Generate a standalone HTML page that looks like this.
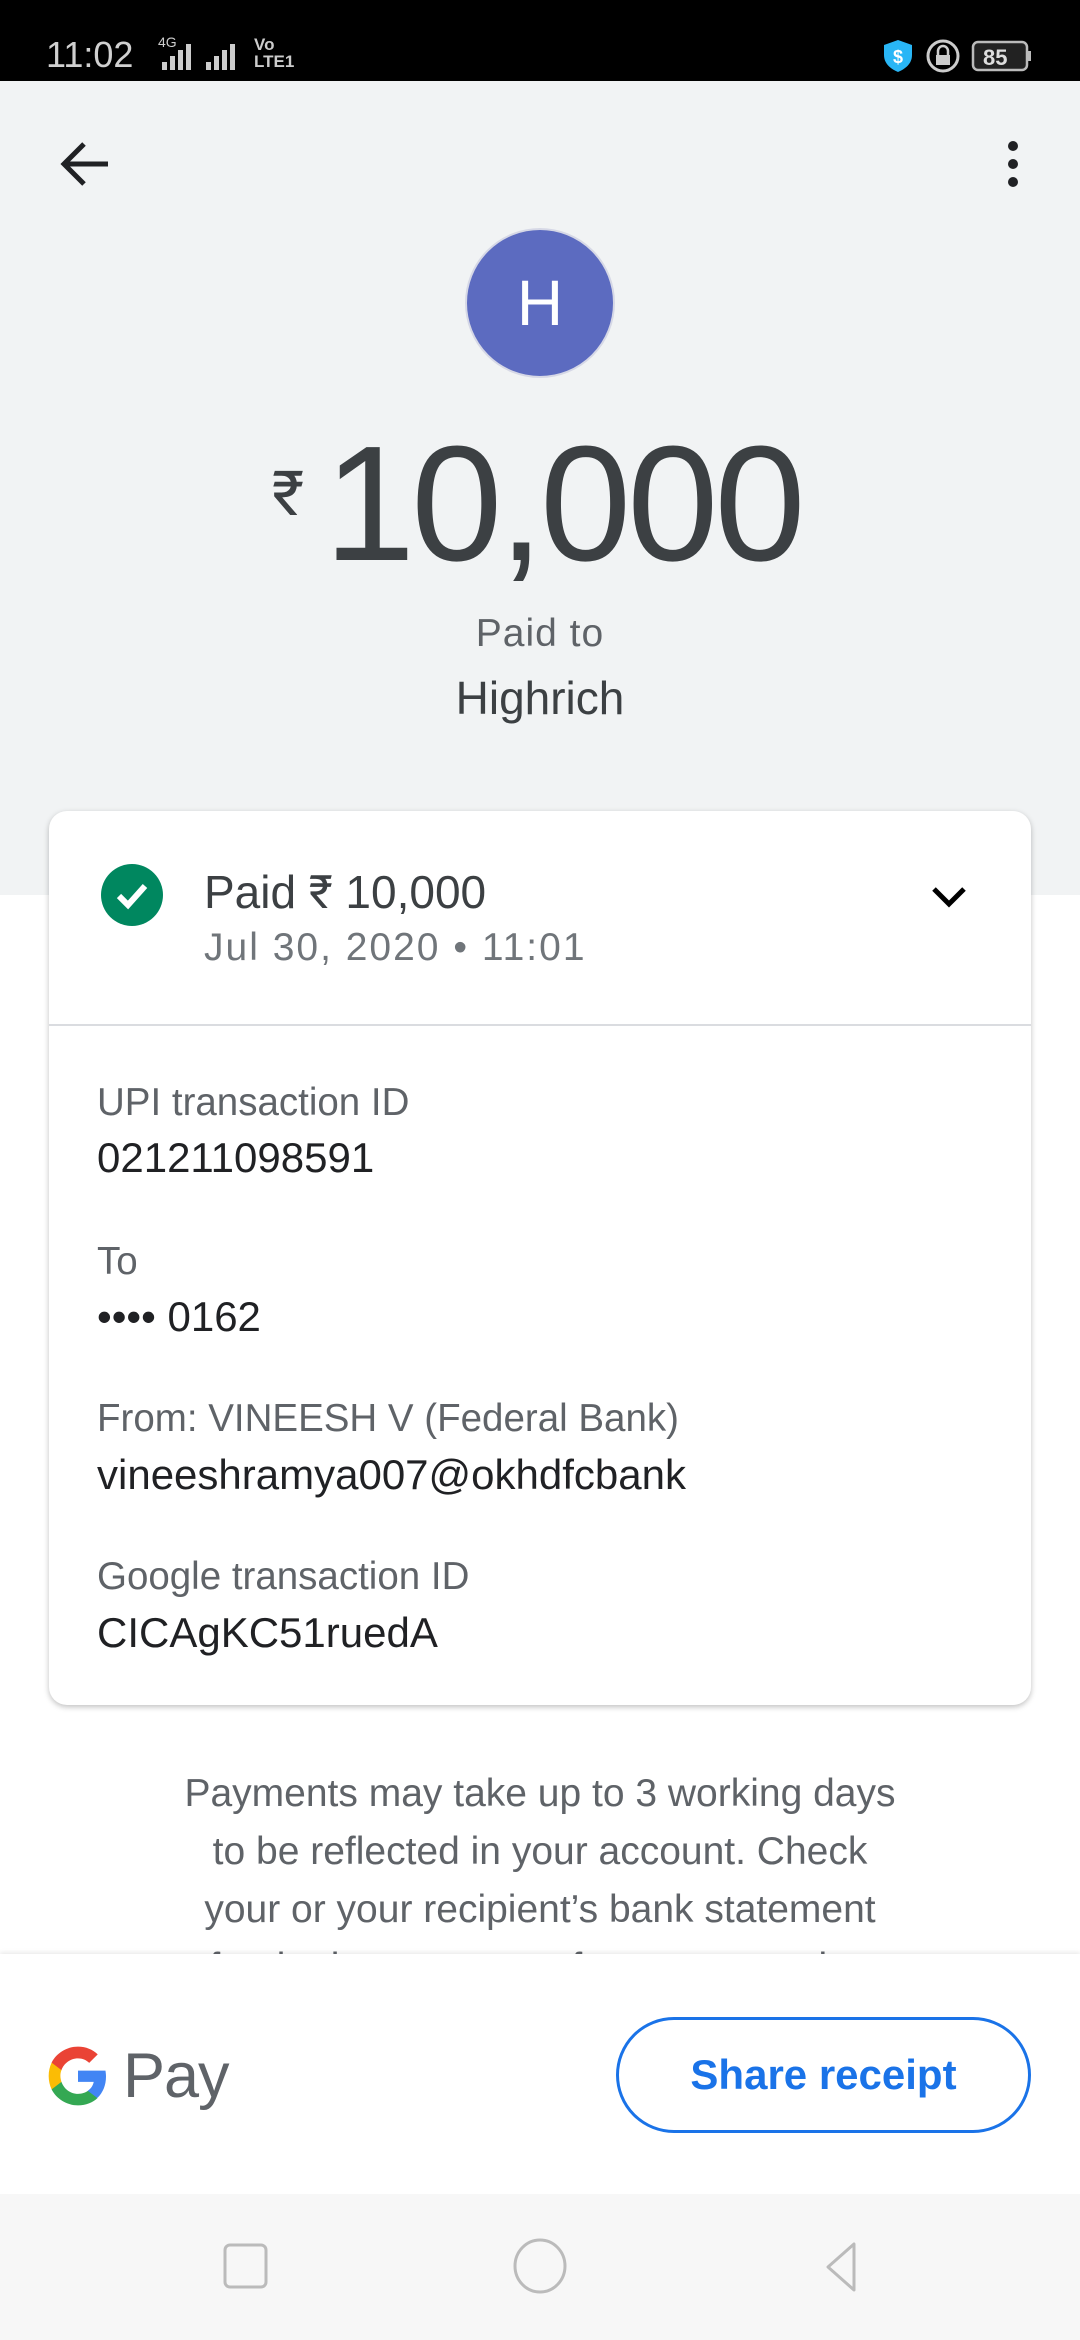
<!DOCTYPE html>
<html><head><meta charset="utf-8"><style>
*{margin:0;padding:0;box-sizing:border-box}
body{width:1080px;height:2340px;position:relative;overflow:hidden;background:#fff;font-family:"Liberation Sans",Roboto,sans-serif;color:#3c4043}
.a{position:absolute}
.sb{left:0;top:0;width:1080px;height:81px;background:#000;color:#ccc}
.top{left:0;top:81px;width:1080px;height:814px;background:#f1f3f4}
.card{left:49px;top:811px;width:982px;height:894px;background:#fff;border-radius:18px;box-shadow:0 2px 6px rgba(0,0,0,.25)}
.lbl{left:48px;font-size:38.5px;color:#5f6368}
.val{left:48px;font-size:42px;color:#202124}
.ft{left:0;width:1080px;text-align:center;font-size:39px;color:#5f6368;line-height:58px}
</style></head><body>
<div class="a sb">
 <div class="a" style="left:46px;top:34px;font-size:36px;color:#d0d0d0">11:02</div>
 <div class="a" style="left:158px;top:34px;font-size:14px;color:#ccc">4G</div>
 <svg class="a" style="left:160px;top:42px" width="140" height="30"><g fill="#ccc"><rect x="2" y="20" width="5" height="8"/><rect x="10" y="14" width="5" height="14"/><rect x="18" y="8" width="5" height="20"/><rect x="26" y="2" width="5" height="26"/><rect x="46" y="20" width="5" height="8"/><rect x="54" y="14" width="5" height="14"/><rect x="62" y="8" width="5" height="20"/><rect x="70" y="2" width="5" height="26"/></g></svg>
 <div class="a" style="left:254px;top:36px;font-size:17px;font-weight:bold;color:#ccc;line-height:17px">Vo<br>LTE1</div>
 <svg class="a" style="left:884px;top:38px" width="150" height="36"><path d="M14 2 L28 7 V17 C28 26 21 31 14 34 C7 31 0 26 0 17 V7Z" fill="#29b6f6"/><text x="9" y="25" font-size="18" fill="#fff" font-family="Liberation Sans" font-weight="bold">$</text><circle cx="59" cy="18" r="15" fill="none" stroke="#ccc" stroke-width="3"/><rect x="52" y="17" width="14" height="10" fill="#ccc"/><path d="M54 17v-4a5 5 0 0 1 10 0v4" fill="none" stroke="#ccc" stroke-width="2.5"/><rect x="89" y="4" width="54" height="28" rx="5" fill="#222" stroke="#bbb" stroke-width="2.5"/><rect x="144" y="13" width="3" height="10" fill="#bbb"/><text x="99" y="27" font-size="22" fill="#ddd" font-family="Liberation Sans" font-weight="bold">85</text></svg>
</div>
<div class="a top"></div>
<svg class="a" style="left:56px;top:140px" width="56" height="48"><path d="M52 24H8M28 4L8 24l20 20" fill="none" stroke="#202124" stroke-width="5"/></svg>
<svg class="a" style="left:1003px;top:140px" width="20" height="50"><circle cx="10" cy="6" r="5" fill="#202124"/><circle cx="10" cy="24" r="5" fill="#202124"/><circle cx="10" cy="42" r="5" fill="#202124"/></svg>
<div class="a" style="left:465px;top:228px;width:150px;height:150px;border-radius:50%;background:#5c6bc0;border:2px solid #d6d8e6;color:#fff;font-size:64px;text-align:center;line-height:146px">H</div>
<div class="a" style="left:272px;top:458px;font-size:62px;color:#3c4043">₹</div>
<div class="a" style="left:324px;top:404px;font-size:164px;color:#3c4043;line-height:200px;letter-spacing:-4px">10,000</div>
<div class="a" style="left:0;top:612px;width:1080px;text-align:center;font-size:39px;color:#5f6368;letter-spacing:1px">Paid to</div>
<div class="a" style="left:0;top:671px;width:1080px;text-align:center;font-size:46px;color:#3c4043">Highrich</div>
<div class="a card">
 <div class="a" style="left:52px;top:53px;width:62px;height:62px;border-radius:50%;background:#00875f"></div>
 <svg class="a" style="left:52px;top:53px" width="62" height="62"><path d="M18 32l9 9 17-19" fill="none" stroke="#fff" stroke-width="6"/></svg>
 <div class="a" style="left:155px;top:54px;font-size:46px;color:#3c4043">Paid ₹ 10,000</div>
 <div class="a" style="left:155px;top:115px;font-size:39px;color:#70757a;letter-spacing:2px">Jul 30, 2020 • 11:01</div>
 <svg class="a" style="left:882px;top:74px" width="36" height="24"><path d="M3 4l15 15 15-15" fill="none" stroke="#000" stroke-width="5"/></svg>
 <div class="a" style="left:0;top:213px;width:982px;height:2px;background:#dadce0"></div>
 <div class="a lbl" style="top:270px">UPI transaction ID</div>
 <div class="a val" style="top:323px">021211098591</div>
 <div class="a lbl" style="top:429px">To</div>
 <div class="a val" style="top:482px">•••• 0162</div>
 <div class="a lbl" style="top:586px">From: VINEESH V (Federal Bank)</div>
 <div class="a val" style="top:640px">vineeshramya007@okhdfcbank</div>
 <div class="a lbl" style="top:744px">Google transaction ID</div>
 <div class="a val" style="top:798px">CICAgKC51ruedA</div>
</div>
<div class="a ft" style="top:1765px">Payments may take up to 3 working days<br>to be reflected in your account. Check<br>your or your recipient’s bank statement<br>for the latest status of your transaction</div>
<div class="a" style="left:0;top:1954px;width:1080px;height:240px;background:#fff;box-shadow:0 -2px 4px rgba(0,0,0,.08)"></div>
<svg class="a" style="left:46px;top:2040px" width="64" height="72" viewBox="0 0 24 24"><path d="M22.5 12.2c0-.8-.1-1.5-.2-2.2H12v4.2h5.9c-.3 1.4-1 2.5-2.2 3.3v2.7h3.6c2-1.9 3.2-4.7 3.2-8z" fill="#4285f4"/><path d="M12 23c3 0 5.5-1 7.3-2.7l-3.6-2.7c-1 .7-2.2 1.1-3.7 1.1-2.9 0-5.3-1.9-6.2-4.5H2.1v2.8C3.9 20.5 7.7 23 12 23z" fill="#34a853"/><path d="M5.8 14.2c-.2-.7-.4-1.4-.4-2.2s.1-1.5.4-2.2V7H2.1C1.4 8.5 1 10.2 1 12s.4 3.5 1.1 5z" fill="#fbbc05"/><path d="M12 5.4c1.6 0 3.1.6 4.2 1.700l3.2-3.2C17.5 2.1 15 1 12 1 7.7 1 3.9 3.5 2.1 7l3.7 2.8C6.7 7.3 9.1 5.4 12 5.4z" fill="#ea4335"/></svg>
<div class="a" style="left:123px;top:2040px;font-size:63px;color:#5f6368;letter-spacing:-1px">Pay</div>
<div class="a" style="left:616px;top:2017px;width:415px;height:116px;border:3px solid #1a73e8;border-radius:58px;color:#1a73e8;font-size:42px;font-weight:bold;text-align:center;line-height:110px">Share receipt</div>
<div class="a" style="left:0;top:2194px;width:1080px;height:146px;background:#f7f7f7"></div>
<svg class="a" style="left:0;top:2194px" width="1080" height="146"><rect x="225" y="51" width="41" height="42" rx="5" fill="none" stroke="#bbb" stroke-width="3"/><ellipse cx="540" cy="72" rx="25" ry="26" fill="none" stroke="#bbb" stroke-width="3"/><path d="M854 50v46l-26-23z" fill="none" stroke="#bbb" stroke-width="3" stroke-linejoin="round"/></svg>
</body></html>
